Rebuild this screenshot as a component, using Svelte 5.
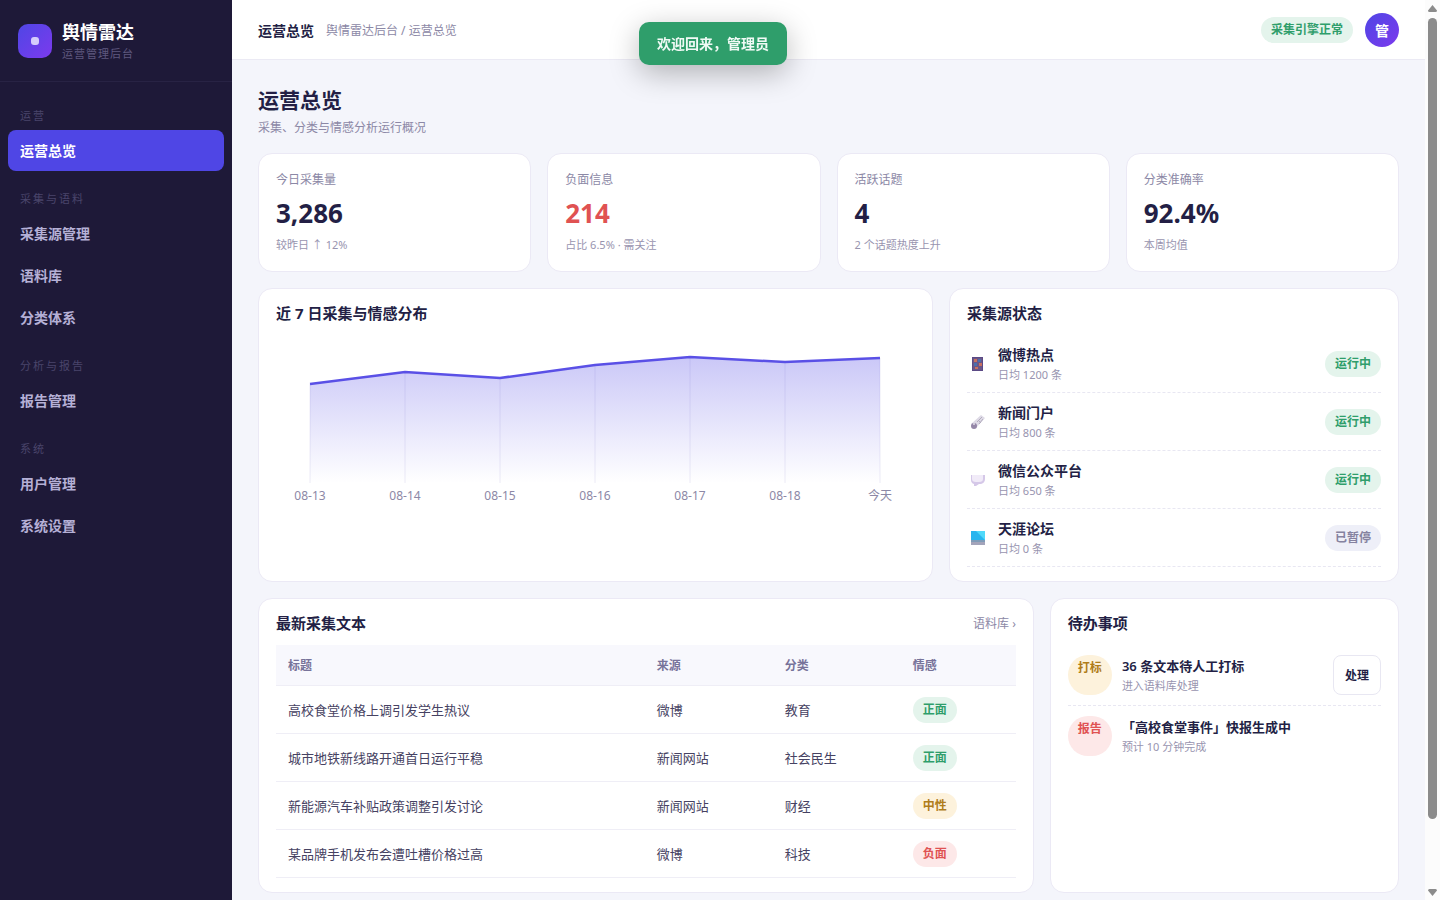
<script>
  const navGroups = [
    { label: "运营", items: ["运营总览"] },
    { label: "采集与语料", items: ["采集源管理", "语料库", "分类体系"] },
    { label: "分析与报告", items: ["报告管理"] },
    { label: "系统", items: ["用户管理", "系统设置"] },
  ];

  const stats = [
    { label: "今日采集量", value: "3,286", note: "较昨日 ↑ 12%" },
    { label: "负面信息", value: "214", note: "占比 6.5% · 需关注", danger: true },
    { label: "活跃话题", value: "4", note: "2 个话题热度上升" },
    { label: "分类准确率", value: "92.4%", note: "本周均值" },
  ];

  const sources = [
    { icon: "phone", name: "微博热点", daily: 1200, running: true },
    { icon: "news", name: "新闻门户", daily: 800, running: true },
    { icon: "chat", name: "微信公众平台", daily: 650, running: true },
    { icon: "laptop", name: "天涯论坛", daily: 0, running: false },
  ];

  const texts = [
    { title: "高校食堂价格上调引发学生热议", source: "微博", category: "教育", mood: "正面", tone: "green" },
    { title: "城市地铁新线路开通首日运行平稳", source: "新闻网站", category: "社会民生", mood: "正面", tone: "green" },
    { title: "新能源汽车补贴政策调整引发讨论", source: "新闻网站", category: "财经", mood: "中性", tone: "amber" },
    { title: "某品牌手机发布会遭吐槽价格过高", source: "微博", category: "科技", mood: "负面", tone: "red" },
  ];

  const todos = [
    { tag: "打标", tone: "amber", title: "36 条文本待人工打标", note: "进入语料库处理", action: "处理" },
    { tag: "报告", tone: "red", title: "「高校食堂事件」快报生成中", note: "预计 10 分钟完成" },
  ];

  const days = ["08-13", "08-14", "08-15", "08-16", "08-17", "08-18", "今天"];
  const heights = [99, 111, 105, 118, 126, 121, 125];
  const baseY = 148;
  const points = days.map((day, i) => ({ day, x: 34 + i * 95, y: baseY - heights[i] }));
  const line = points.map((p) => `${p.x},${p.y}`).join(" ");
  const area = `${points[0].x},${baseY} ${line} ${points[points.length - 1].x},${baseY}`;

  let active = $state("运营总览");
</script>

<div class="shell">
  <aside class="sidebar">
    <div class="brand">
      <span class="logo"><i></i></span>
      <div>
        <div class="brand-name">舆情雷达</div>
        <div class="brand-sub">运营管理后台</div>
      </div>
    </div>
    <nav>
      {#each navGroups as group}
        <div class="nav-label">{group.label}</div>
        {#each group.items as item}
          <button class="nav-item" class:active={active === item} onclick={() => (active = item)}>
            {item}
          </button>
        {/each}
      {/each}
    </nav>
  </aside>

  <div class="main">
    <header class="topbar">
      <strong>运营总览</strong>
      <span class="crumbs">舆情雷达后台 / 运营总览</span>
      <span class="pill green engine">采集引擎正常</span>
      <span class="avatar">管</span>
    </header>

    <main class="content">
      <h1>运营总览</h1>
      <p class="lead">采集、分类与情感分析运行概况</p>

      <section class="stats">
        {#each stats as s}
          <div class="card stat">
            <div class="stat-label">{s.label}</div>
            <div class="stat-value" class:danger={s.danger}>{s.value}</div>
            <div class="stat-note">{s.note}</div>
          </div>
        {/each}
      </section>

      <div class="row row-chart">
        <section class="card">
          <div class="card-head"><h2>近 7 日采集与情感分布</h2></div>
          <svg class="chart" viewBox="0 0 639 172" role="img" aria-label="近 7 日采集与情感分布">
            <defs>
              <linearGradient id="fill" x1="0" y1="0" x2="0" y2="1">
                <stop offset="0" stop-color="#4f46e5" stop-opacity="0.3" />
                <stop offset="1" stop-color="#4f46e5" stop-opacity="0" />
              </linearGradient>
            </defs>
            {#each points as p}
              <line x1={p.x} y1={p.y} x2={p.x} y2={baseY} stroke="#ecebf6" />
            {/each}
            <polygon points={area} fill="url(#fill)" />
            <polyline points={line} fill="none" stroke="#5a50e6" stroke-width="2.5" />
            {#each points as p}
              <text x={p.x} y="165" text-anchor="middle">{p.day}</text>
            {/each}
          </svg>
        </section>

        <section class="card">
          <div class="card-head"><h2>采集源状态</h2></div>
          {#each sources as s}
            <div class="source">
              <svg class="source-icon" viewBox="0 0 16 16" aria-hidden="true">
                {#if s.icon === "phone"}
                  <rect x="2" y="1" width="11" height="14" fill="#5b4a85" />
                  <rect x="3" y="2" width="9" height="12" fill="#6b5687" />
                  <path d="M4 3h3v3H4zM9 7h3v3H9zM5 11h3v2H5z" fill="#c9705f" />
                  <path d="M8 3h3v3H8zM4 7h3v3H4z" fill="#4b6fae" />
                {:else if s.icon === "news"}
                  <path d="M1 10 11 1l4 3-9 10z" fill="#dedae6" />
                  <path d="m7 8 5-5M9 10l4-5M8 6l3 3" stroke="#b3adbe" fill="none" />
                  <circle cx="4" cy="12" r="3" fill="#9587a8" />
                  <circle cx="4" cy="10" r="1" fill="#e2dcea" />
                {:else if s.icon === "chat"}
                  <path d="M1 3h14v4q0 4-4 5H9l-3 2H4v-2q-3-1-3-4z" fill="#d5c8e8" />
                  <path d="M2 3h11v4q0 3-4 3H6Q2 10 2 7z" fill="#f1ebf8" />
                {:else}
                  <path d="M1 1h14v10H1z" fill="#28b5ee" />
                  <path d="M6 1h9v9z" fill="#4fd9fa" />
                  <path d="M1 10h14v5H1z" fill="#a3a4ba" />
                  <path d="M1 10h14v2H1z" fill="#7f9cb8" />
                {/if}
              </svg>
              <div class="grow">
                <div class="source-name">{s.name}</div>
                <div class="meta">日均 {s.daily} 条</div>
              </div>
              <span class="pill {s.running ? 'green' : 'gray'}">{s.running ? "运行中" : "已暂停"}</span>
            </div>
          {/each}
        </section>
      </div>

      <div class="row row-texts">
        <section class="card">
          <div class="card-head">
            <h2>最新采集文本</h2>
            <a href="#corpus">语料库 ›</a>
          </div>
          <table>
            <thead>
              <tr>
                <th>标题</th>
                <th class="col-mid">来源</th>
                <th class="col-mid">分类</th>
                <th class="col-mood">情感</th>
              </tr>
            </thead>
            <tbody>
              {#each texts as t}
                <tr>
                  <td>{t.title}</td>
                  <td>{t.source}</td>
                  <td>{t.category}</td>
                  <td><span class="pill {t.tone}">{t.mood}</span></td>
                </tr>
              {/each}
            </tbody>
          </table>
        </section>

        <section class="card">
          <div class="card-head"><h2>待办事项</h2></div>
          {#each todos as t}
            <div class="todo">
              <span class="pill {t.tone}">{t.tag}</span>
              <div class="grow">
                <div class="todo-title">{t.title}</div>
                <div class="meta">{t.note}</div>
              </div>
              {#if t.action}
                <button class="btn">{t.action}</button>
              {/if}
            </div>
          {/each}
        </section>
      </div>
    </main>

    <div class="toast" role="status">欢迎回来，管理员</div>
  </div>

  <div class="scrollbar" aria-hidden="true">
    <svg viewBox="0 0 15 16"><path d="M7.5 5 12 10.5q0 1.5-1.5 1.5h-6Q3 12 3 10.5z" /></svg>
    <div class="thumb"></div>
    <svg class="down" viewBox="0 0 15 16"><path d="M7.5 12 12 6.5Q12 5 10.5 5h-6Q3 5 3 6.5z" /></svg>
  </div>
</div>

<style>
  :global(body) {
    margin: 0;
    background: #f4f5fb;
  }
  .shell {
    display: flex;
    height: 100vh;
    font-family: "Noto Sans", "Noto Sans CJK SC", sans-serif;
    font-size: 13px;
    color: #231f45;
  }
  .shell * {
    box-sizing: border-box;
  }
  button {
    font-family: inherit;
    cursor: pointer;
  }

  .sidebar {
    flex: 0 0 232px;
    background: #1e1938;
  }
  .brand {
    display: flex;
    align-items: center;
    gap: 10px;
    height: 82px;
    padding: 0 18px;
    border-bottom: 1px solid #282344;
  }
  .logo {
    display: flex;
    align-items: center;
    justify-content: center;
    width: 34px;
    height: 34px;
    border-radius: 10px;
    background: linear-gradient(135deg, #4f46e5, #7c3aed);
  }
  .logo i {
    width: 8px;
    height: 8px;
    border-radius: 3px;
    background: #d5cdfb;
  }
  .brand-name {
    font-size: 18px;
    font-weight: 700;
    line-height: 26px;
    color: #fff;
  }
  .brand-sub {
    font-size: 11px;
    line-height: 18px;
    letter-spacing: 1px;
    color: #5e587f;
  }
  nav {
    display: flex;
    flex-direction: column;
    padding: 7px 8px;
  }
  .nav-label {
    padding: 18px 12px 5px;
    font-size: 11px;
    line-height: 18px;
    letter-spacing: 2px;
    color: #4a456b;
  }
  .nav-item {
    height: 41px;
    margin-bottom: 1px;
    padding: 0 12px 2px;
    border: 0;
    border-radius: 8px;
    background: none;
    font-size: 14px;
    font-weight: 600;
    text-align: left;
    color: #b5b0d6;
  }
  .nav-item.active {
    background: #4f46e5;
    color: #fff;
  }

  .main {
    flex: 1;
    min-width: 0;
    overflow-y: auto;
    scrollbar-width: none;
  }
  .topbar {
    display: flex;
    align-items: center;
    gap: 12px;
    height: 60px;
    padding: 0 26px;
    border-bottom: 1px solid #ebeaf4;
    background: #fff;
    font-size: 14px;
  }
  .crumbs {
    font-size: 12px;
    color: #8c88a6;
  }
  .engine {
    margin-left: auto;
  }
  .avatar {
    display: flex;
    align-items: center;
    justify-content: center;
    width: 34px;
    height: 34px;
    border-radius: 50%;
    background: linear-gradient(135deg, #4f46e5, #7c3aed);
    font-weight: 700;
    color: #fff;
  }

  .content {
    padding: 24px 26px 40px;
  }
  h1 {
    margin: 0;
    font-size: 21px;
    line-height: 32px;
  }
  .lead {
    margin: 2px 0 15px;
    font-size: 12px;
    line-height: 20px;
    color: #8c88a6;
  }
  .card {
    padding: 14px 17px;
    border: 1px solid #ebe9f5;
    border-radius: 14px;
    background: #fff;
  }
  .stats {
    display: grid;
    grid-template-columns: repeat(4, 1fr);
    gap: 16px;
  }
  .stat {
    padding: 17px;
  }
  .stat-label {
    font-size: 12px;
    line-height: 18px;
    color: #8c88a6;
  }
  .stat-value {
    margin: 5px 0 4px;
    font-size: 26px;
    font-weight: 700;
    line-height: 38px;
  }
  .stat-value.danger {
    color: #e05252;
  }
  .stat-note,
  .meta {
    font-size: 11px;
    line-height: 18px;
    color: #9894af;
  }
  .row {
    display: grid;
    gap: 16px;
    margin-top: 16px;
  }
  .row-chart {
    grid-template-columns: 3fr 2fr;
  }
  .row-texts {
    grid-template-columns: 20fr 9fr;
  }
  .card-head {
    display: flex;
    align-items: center;
    justify-content: space-between;
    height: 20px;
    margin-bottom: 12px;
  }
  h2 {
    margin: 0;
    font-size: 15px;
    line-height: 20px;
  }
  .card-head a {
    font-size: 12px;
    color: #8c88a6;
    text-decoration: none;
  }
  .chart {
    display: block;
    width: 100%;
  }
  .chart text {
    font-size: 12px;
    fill: #8c88a6;
  }

  .source {
    display: flex;
    align-items: center;
    gap: 12px;
    height: 58px;
    border-bottom: 1px dashed #e8e7f2;
  }
  .source-icon {
    width: 16px;
    height: 16px;
    margin-left: 3px;
  }
  .grow {
    flex: 1;
  }
  .source-name {
    font-size: 14px;
    font-weight: 600;
    line-height: 22px;
  }
  .pill {
    display: inline-block;
    padding: 3px 10px;
    border-radius: 99px;
    font-size: 12px;
    font-weight: 600;
    line-height: 20px;
    white-space: nowrap;
  }
  .green {
    background: #e4f4ec;
    color: #2f9e6b;
  }
  .amber {
    background: #fdf2dc;
    color: #b07d1a;
  }
  .red {
    background: #fde8e8;
    color: #e05252;
  }
  .gray {
    background: #eeeff8;
    color: #8582a0;
  }

  table {
    width: 100%;
    table-layout: fixed;
    border-collapse: separate;
    border-spacing: 0;
  }
  th,
  td {
    height: 48px;
    padding: 0 12px;
    border-bottom: 1px solid #efeef6;
    text-align: left;
    color: #464262;
  }
  th {
    height: 41px;
    background: #f8f8fd;
    font-size: 12px;
    font-weight: 600;
    color: #77739a;
  }
  .col-mid {
    width: 128px;
  }
  .col-mood {
    width: 115px;
  }

  .todo {
    display: flex;
    gap: 10px;
    padding: 10px 0;
    border-bottom: 1px dashed #e8e7f2;
  }
  .todo:last-child {
    border-bottom: 0;
  }
  .todo-title {
    font-weight: 600;
    line-height: 22px;
  }
  .btn {
    padding: 0 11px;
    border: 1px solid #e8e7f2;
    border-radius: 8px;
    background: #fff;
    font-size: 12px;
    font-weight: 600;
    color: #231f45;
  }

  /* Centred on the page minus the scrollbar, sidebar included. */
  .toast {
    position: fixed;
    top: 22px;
    left: calc(50% - 7px);
    transform: translateX(-50%);
    padding: 11px 18px;
    border-radius: 10px;
    background: #2f9e6b;
    box-shadow: 0 8px 30px rgba(0, 0, 0, 0.28);
    font-size: 14px;
    font-weight: 600;
    line-height: 21px;
    color: #f0faf5;
  }

  .scrollbar {
    display: flex;
    flex-direction: column;
    align-items: center;
    flex: 0 0 15px;
    background: #fcfcfc;
  }
  .scrollbar svg {
    width: 15px;
    height: 16px;
    fill: #8b8b8b;
  }
  .thumb {
    width: 9px;
    height: 89%;
    margin-top: 2px;
    border-radius: 5px;
    background: #8b8b8b;
  }
  .down {
    margin-top: auto;
  }
</style>
